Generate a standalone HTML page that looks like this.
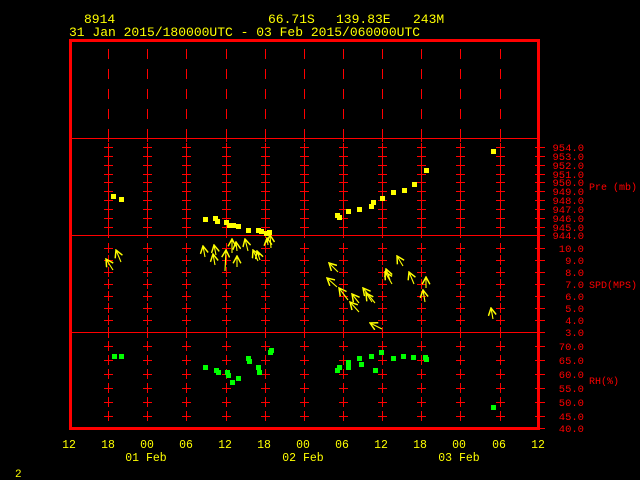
<!DOCTYPE html>
<html><head><meta charset="utf-8"><style>
html,body{margin:0;padding:0;background:#000;width:640px;height:480px;overflow:hidden}
svg{display:block}
text{font-family:"Liberation Mono",monospace}
</style></head><body>
<svg width="640" height="480" viewBox="0 0 640 480" xmlns="http://www.w3.org/2000/svg">
<defs>
<marker id="ah" viewBox="0 0 8 8" refX="7" refY="4" markerWidth="9" markerHeight="9" markerUnits="userSpaceOnUse" orient="auto">
<path d="M0.5,0.5 L7,4 L0.5,7.5" fill="none" stroke="#ff0" stroke-width="1.3"/>
</marker>
<g id="col" stroke="#f00" stroke-width="1" fill="none" shape-rendering="crispEdges">
<line x1="0.5" y1="49" x2="0.5" y2="138" stroke-dasharray="10 10"/>
<line x1="0.5" y1="134" x2="0.5" y2="142"/>
<line x1="0.5" y1="143" x2="0.5" y2="238"/>
<path d="M-4,147.5h9M-4,156.5h9M-4,165.5h9M-4,174.5h9M-4,182.5h9M-4,191.5h9M-4,200.5h9M-4,209.5h9M-4,218.5h9M-4,227.5h9"/>
<path d="M0.5,243v10M0.5,255v10M0.5,267v10M0.5,279v10M0.5,291v10M0.5,303v10M0.5,315v10M0.5,327v11"/>
<path d="M-4,248.5h9M-4,260.5h9M-4,272.5h9M-4,284.5h9M-4,296.5h9M-4,308.5h9M-4,320.5h9"/>
<path d="M0.5,341v10M0.5,355v10M0.5,369v10M0.5,383v10M0.5,397v10M0.5,411v10"/>
<path d="M-4,346.5h9M-4,360.5h9M-4,374.5h9M-4,388.5h9M-4,402.5h9M-4,416.5h9"/>
</g>
</defs>
<use href="#col" x="108"/><use href="#col" x="147"/><use href="#col" x="186"/><use href="#col" x="226"/>
<use href="#col" x="265"/><use href="#col" x="304"/><use href="#col" x="343"/><use href="#col" x="382"/>
<use href="#col" x="421"/><use href="#col" x="460"/><use href="#col" x="500"/>
<g stroke="#f00" stroke-width="1" shape-rendering="crispEdges">
<line x1="72" y1="138.5" x2="537" y2="138.5"/>
<line x1="72" y1="235.5" x2="537" y2="235.5"/>
<line x1="72" y1="332.5" x2="537" y2="332.5"/>
</g>
<rect x="70.5" y="40.5" width="468" height="388" fill="none" stroke="#f00" stroke-width="3" shape-rendering="crispEdges"/>
<path stroke="#f00" stroke-width="1" shape-rendering="crispEdges" d="M535,147.5h10M535,156.5h10M535,165.5h10M535,174.5h10M535,182.5h10M535,191.5h10M535,200.5h10M535,209.5h10M535,218.5h10M535,227.5h10M535,235.5h10M535,248.5h10M535,260.5h10M535,272.5h10M535,284.5h10M535,296.5h10M535,308.5h10M535,320.5h10M535,332.5h10M535,346.5h10M535,360.5h10M535,374.5h10M535,388.5h10M535,402.5h10M535,416.5h10M535,428.5h10"/>
<g fill="#f00" font-size="10.5" text-anchor="end">
<text x="584" y="151">954.0</text><text x="584" y="160">953.0</text><text x="584" y="169">952.0</text><text x="584" y="178">951.0</text><text x="584" y="186">950.0</text><text x="584" y="195">949.0</text><text x="584" y="204">948.0</text><text x="584" y="213">947.0</text><text x="584" y="222">946.0</text><text x="584" y="231">945.0</text><text x="584" y="239">944.0</text>
<text x="584" y="252">10.0</text><text x="584" y="264">9.0</text><text x="584" y="276">8.0</text><text x="584" y="288">7.0</text><text x="584" y="300">6.0</text><text x="584" y="312">5.0</text><text x="584" y="324">4.0</text><text x="584" y="336">3.0</text>
<text x="584" y="350">70.0</text><text x="584" y="364">65.0</text><text x="584" y="378">60.0</text><text x="584" y="392">55.0</text><text x="584" y="406">50.0</text><text x="584" y="420">45.0</text><text x="584" y="432">40.0</text>
</g>
<g fill="#f00" font-size="10">
<text x="589" y="190">Pre (mb)</text>
<text x="589" y="288">SPD(MPS)</text>
<text x="589" y="384">RH(%)</text>
</g>
<g fill="#ff0" font-size="13">
<text x="84" y="23">8914</text>
<text x="268" y="23">66.71S</text>
<text x="336" y="23">139.83E</text>
<text x="413" y="23">243M</text>
<text x="69" y="36">31 Jan 2015/180000UTC - 03 Feb 2015/060000UTC</text>
</g>
<g fill="#ff0" font-size="11.5" text-anchor="middle">
<text x="69" y="448">12</text><text x="108" y="448">18</text><text x="147" y="448">00</text><text x="186" y="448">06</text><text x="225" y="448">12</text><text x="264" y="448">18</text><text x="303" y="448">00</text><text x="342" y="448">06</text><text x="381" y="448">12</text><text x="420" y="448">18</text><text x="459" y="448">00</text><text x="499" y="448">06</text><text x="538" y="448">12</text>
<text x="146" y="461">01 Feb</text><text x="303" y="461">02 Feb</text><text x="459" y="461">03 Feb</text>
</g>
<text x="15" y="477" fill="#ff0" font-size="11">2</text>
<g fill="#ff0">
<rect x="111" y="194" width="5" height="5"/><rect x="119" y="197" width="5" height="5"/>
<rect x="203" y="217" width="5" height="5"/><rect x="213" y="216" width="5" height="5"/><rect x="215" y="219" width="5" height="5"/><rect x="224" y="220" width="5" height="5"/><rect x="227" y="223" width="5" height="5"/><rect x="231" y="223" width="5" height="5"/><rect x="236" y="224" width="5" height="5"/><rect x="246" y="228" width="5" height="5"/><rect x="256" y="228" width="5" height="5"/><rect x="259" y="229" width="5" height="5"/><rect x="264" y="231" width="5" height="5"/><rect x="267" y="230" width="5" height="5"/>
<rect x="335" y="213" width="5" height="5"/><rect x="337" y="215" width="5" height="5"/><rect x="346" y="209" width="5" height="5"/><rect x="357" y="207" width="5" height="5"/><rect x="369" y="204" width="5" height="5"/><rect x="371" y="200" width="5" height="5"/><rect x="380" y="196" width="5" height="5"/><rect x="391" y="190" width="5" height="5"/><rect x="402" y="188" width="5" height="5"/><rect x="412" y="182" width="5" height="5"/><rect x="424" y="168" width="5" height="5"/><rect x="491" y="149" width="5" height="5"/>
</g>
<g fill="#0f0">
<rect x="112" y="354" width="5" height="5"/><rect x="119" y="354" width="5" height="5"/>
<rect x="203" y="365" width="5" height="5"/><rect x="214" y="368" width="5" height="5"/><rect x="216" y="370" width="5" height="5"/><rect x="225" y="370" width="5" height="5"/><rect x="226" y="373" width="5" height="5"/><rect x="230" y="380" width="5" height="5"/><rect x="236" y="376" width="5" height="5"/><rect x="246" y="356" width="5" height="5"/><rect x="247" y="359" width="5" height="5"/><rect x="256" y="365" width="5" height="5"/><rect x="257" y="370" width="5" height="5"/><rect x="268" y="350" width="5" height="5"/><rect x="269" y="348" width="5" height="5"/>
<rect x="335" y="368" width="5" height="5"/><rect x="337" y="365" width="5" height="5"/><rect x="346" y="360" width="5" height="5"/><rect x="346" y="365" width="5" height="5"/><rect x="357" y="356" width="5" height="5"/><rect x="359" y="362" width="5" height="5"/><rect x="369" y="354" width="5" height="5"/><rect x="373" y="368" width="5" height="5"/><rect x="379" y="350" width="5" height="5"/><rect x="391" y="356" width="5" height="5"/><rect x="401" y="354" width="5" height="5"/><rect x="411" y="355" width="5" height="5"/><rect x="423" y="355" width="5" height="5"/><rect x="424" y="357" width="5" height="5"/><rect x="491" y="405" width="5" height="5"/>
</g>
<g stroke="#ff0" stroke-width="1.1" fill="none" marker-end="url(#ah)">
<line x1="113" y1="270" x2="106" y2="259"/>
<line x1="121" y1="262" x2="116" y2="250"/>
<line x1="205" y1="257" x2="203" y2="246"/>
<line x1="216" y1="255" x2="214" y2="245"/>
<line x1="215" y1="265" x2="213" y2="254"/>
<line x1="232" y1="253" x2="232" y2="239"/>
<line x1="225" y1="271" x2="226" y2="250"/>
<line x1="237" y1="251" x2="236" y2="242"/>
<line x1="237" y1="267" x2="237" y2="256"/>
<line x1="248" y1="251" x2="245" y2="239"/>
<line x1="258" y1="261" x2="253" y2="250"/>
<line x1="260" y1="260" x2="257" y2="251"/>
<line x1="271" y1="248" x2="270" y2="235"/>
<line x1="268" y1="245" x2="267" y2="238"/>
<line x1="338" y1="272" x2="329" y2="263"/>
<line x1="337" y1="287" x2="327" y2="278"/>
<line x1="348" y1="300" x2="339" y2="288"/>
<line x1="359" y1="312" x2="350" y2="302"/>
<line x1="359" y1="303" x2="352" y2="294"/>
<line x1="375" y1="303" x2="363" y2="288"/>
<line x1="372" y1="302" x2="366" y2="293"/>
<line x1="382" y1="329" x2="370" y2="323"/>
<line x1="390" y1="280" x2="386" y2="269"/>
<line x1="392" y1="284" x2="385" y2="272"/>
<line x1="403" y1="266" x2="397" y2="256"/>
<line x1="414" y1="284" x2="409" y2="272"/>
<line x1="426" y1="288" x2="426" y2="277"/>
<line x1="425" y1="302" x2="423" y2="290"/>
<line x1="493" y1="319" x2="491" y2="308"/>
</g>
</svg>
</body></html>
